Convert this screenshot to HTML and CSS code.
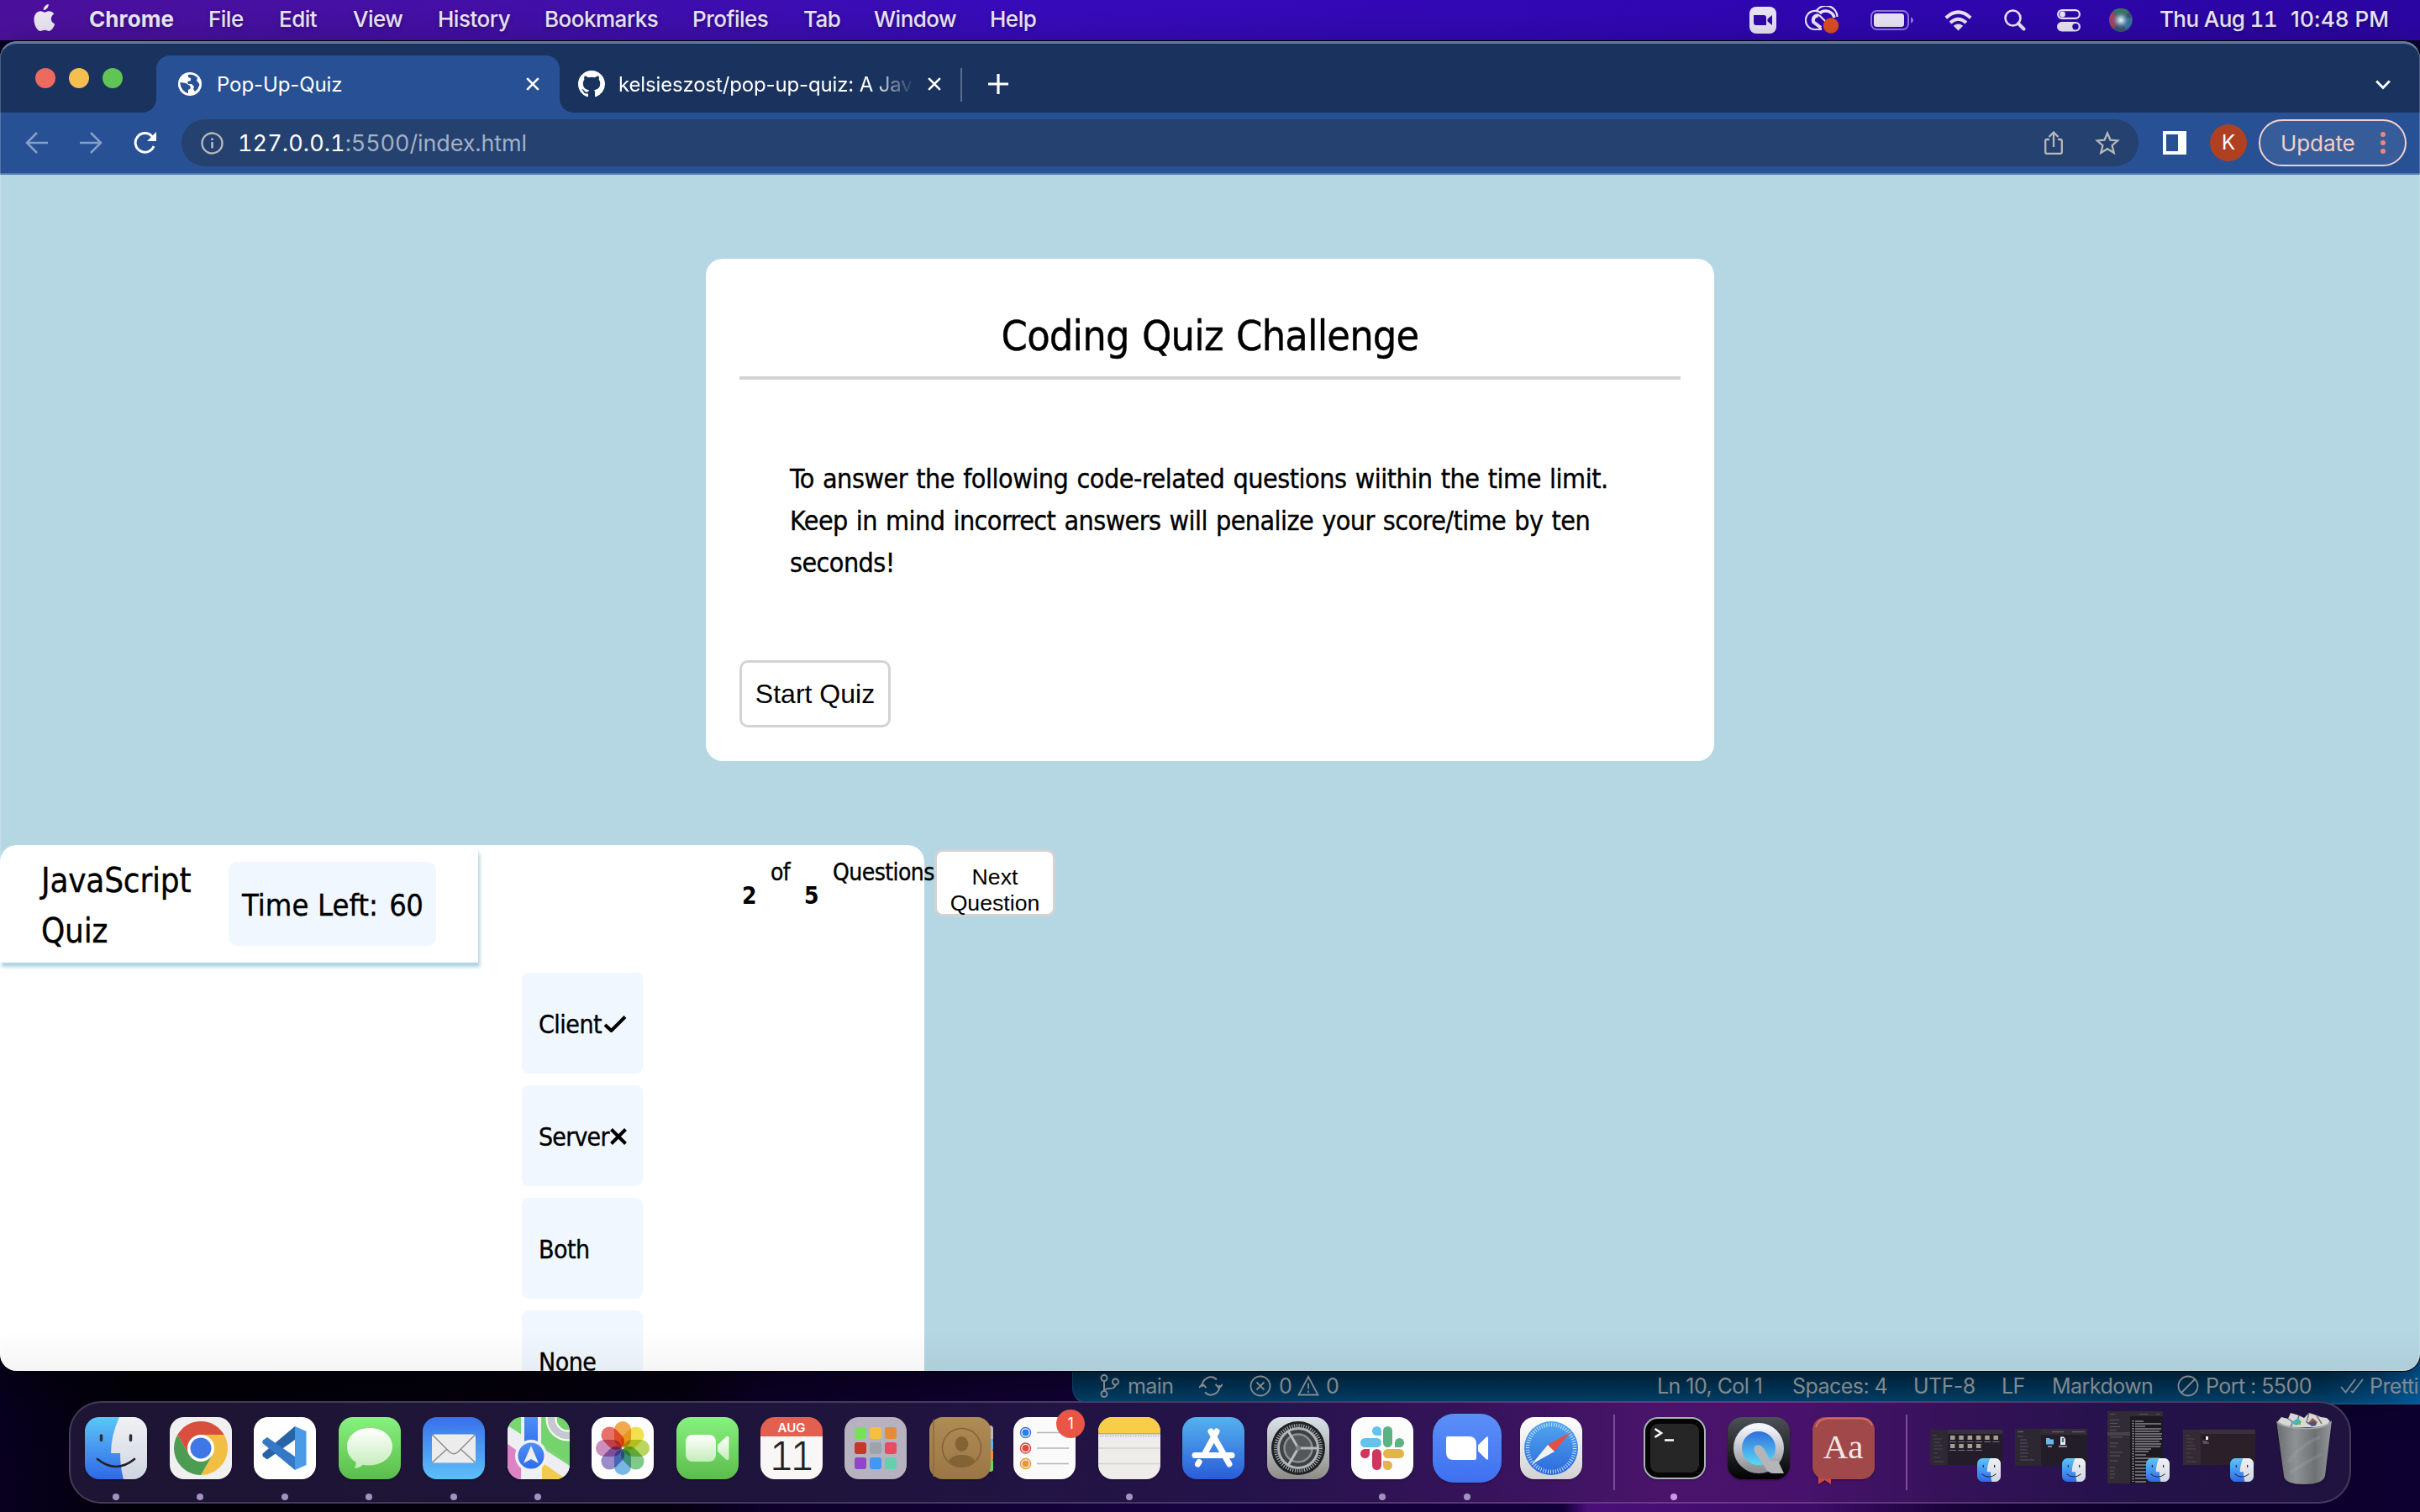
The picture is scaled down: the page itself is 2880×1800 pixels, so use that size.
FILE: index.html
```html
<!DOCTYPE html>
<html lang="en">
<head>
<meta charset="utf-8">
<title>Pop-Up-Quiz</title>
<link rel="stylesheet" href="styles.css">
</head>
<body>
<svg class="defs" width="0" height="0" aria-hidden="true">
  <defs>
    <linearGradient id="blueFace" x2="0" y2="1"><stop offset="0" stop-color="#5cc6f8"/><stop offset="1" stop-color="#3068e8"/></linearGradient>
    <linearGradient id="whiteFace" x2="0" y2="1"><stop offset="0" stop-color="#f1f1f3"/><stop offset="1" stop-color="#cfd6e2"/></linearGradient>
    <linearGradient id="silver" x2="0" y2="1"><stop offset="0" stop-color="#fff"/><stop offset="1" stop-color="#d2d2d2"/></linearGradient>
    <linearGradient id="bubble" x2="0" y2="1"><stop offset="0" stop-color="#fff"/><stop offset="1" stop-color="#c4ecb9"/></linearGradient>
    <linearGradient id="mapBlue" x2="0" y2="1"><stop offset="0" stop-color="#4f8ff5"/><stop offset="1" stop-color="#2c6bee"/></linearGradient>
    <linearGradient id="bin" x2="1" y2="0"><stop offset="0" stop-color="#6b6f71"/><stop offset=".35" stop-color="#8e9294"/><stop offset=".7" stop-color="#6d7173"/><stop offset="1" stop-color="#94989a"/></linearGradient>
    <linearGradient id="qRing" x2="0" y2="1"><stop offset="0" stop-color="#f4f6ff"/><stop offset="1" stop-color="#8f9296"/></linearGradient>
    <linearGradient id="qBlue" x2="0" y2="1"><stop offset="0" stop-color="#2d62d6"/><stop offset="1" stop-color="#5fe6fb"/></linearGradient>
    <linearGradient id="compass" x2="0" y2="1"><stop offset="0" stop-color="#50a8ee"/><stop offset="1" stop-color="#2d68dd"/></linearGradient>
    <linearGradient id="gearBg" x2="0" y2="1"><stop offset="0" stop-color="#d9e3ea"/><stop offset="1" stop-color="#8e8c88"/></linearGradient>
    <linearGradient id="bookBg" x2="0" y2="1"><stop offset="0" stop-color="#ae8c55"/><stop offset="1" stop-color="#9b7645"/></linearGradient>
    <radialGradient id="siri"><stop offset="0" stop-color="#fff"/><stop offset=".4" stop-color="#9cc6dd" stop-opacity=".8"/><stop offset="1" stop-color="#3b5c84" stop-opacity="0"/></radialGradient>
    <clipPath id="tile"><rect width="74" height="74" rx="17"/></clipPath>
    <symbol id="finder" viewBox="0 0 74 74">
      <g clip-path="url(#tile)">
        <rect width="74" height="74" fill="url(#blueFace)"/>
        <path d="M41 0Q31 22 31 43H42Q42 60 46 74H74V0Z" fill="url(#whiteFace)"/>
        <path d="M19.500 22V27.500M54.500 22V27.500" stroke="#2b2f38" stroke-width="3.500" stroke-linecap="round"/>
        <path d="M15 50Q37 68 59 50" fill="none" stroke="#202226" stroke-width="2.600" stroke-linecap="round"/>
      </g>
    </symbol>
  </defs>
</svg>

<div class="desktop">
  <header class="menubar">
    <nav class="menus">
      <svg width="26" height="33" viewBox="0 0 26 33" fill="#eee8f6"><path d="M17.800 0C18 3.500 15 7 11.800 7 11.500 3.800 14.500.5 17.800 0ZM18 8.200C20.500 8.200 23 9.400 24.400 11.600 19.200 14.800 20 21.500 25.300 23.700 23.800 28 21 32 18.200 32 16.200 32 15.600 30.800 13.200 30.800 10.800 30.800 10 32 8.200 32 4.500 32 .5 25 .5 18.400.5 11.800 4.500 8.300 8.200 8.300 10.500 8.300 12 9.700 13.400 9.700 14.600 9.700 16 8.200 18 8.200Z"/></svg>
      <b>Chrome</b><span>File</span><span>Edit</span><span>View</span><span>History</span><span>Bookmarks</span><span>Profiles</span><span>Tab</span><span>Window</span><span>Help</span>
    </nav>
    <div class="tray">
      <svg width="32" height="32" viewBox="0 0 32 32"><rect width="32" height="32" rx="8" fill="#eae5f6"/><path d="M5 10H17Q20 10 20 13V22H8Q5 22 5 19ZM21.500 14.500 27 10V22L21.500 17.500Z" fill="#3007ae"/></svg>
      <svg width="42" height="34" viewBox="0 0 42 34" fill="none" stroke="#eae5f6" stroke-width="2.200"><path d="M20 28H12A11 11 0 1 1 20 9.500"/><path d="M14 5.500A13.500 13.500 0 0 1 38.500 13M20 28 11 20A5 5 0 0 1 18 12L25 19"/><path d="M18 8C25 3.500 33 7 35 14" stroke-width="3.600"/><path d="M19 26 10 19A6 6 0 0 1 16 11.500" stroke-width="4"/><circle cx="31" cy="23.500" r="9.200" fill="#dc4e26" stroke="none"/></svg>
      <svg width="52" height="24" viewBox="0 0 52 24"><rect x="1" y="1" width="44" height="22" rx="6.500" fill="none" stroke="#8f78d6" stroke-width="2"/><rect x="4" y="4" width="36" height="16" rx="3.500" fill="#eae5f6"/><path d="M48 8.500Q51 9.500 51 12T48 15.500Z" fill="#8f78d6"/></svg>
      <svg width="33" height="25" viewBox="0 0 33 25" fill="none" stroke="#eae5f6" stroke-width="4"><path d="M1.800 9.200Q16.500-4.500 31.200 9.200M7 15Q16.500 6.500 26 15"/><path d="M16.500 24.500 10.800 18.800Q16.500 14 22.200 18.800Z" fill="#eae5f6" stroke="none"/></svg>
      <svg width="26" height="26" viewBox="0 0 26 26" fill="none" stroke="#eae5f6" stroke-linecap="round"><circle cx="10.500" cy="10.500" r="9" stroke-width="2.600"/><path d="M17 17 23.500 23.500" stroke-width="4"/></svg>
      <svg width="28" height="27" viewBox="0 0 28 27"><rect x="1.100" y="1.100" width="25.800" height="9.800" rx="4.900" fill="none" stroke="#eae5f6" stroke-width="2.200"/><circle cx="6.500" cy="6" r="3.400" fill="#eae5f6"/><rect y="15" width="28" height="11.500" rx="5.700" fill="#eae5f6"/><circle cx="22" cy="20.700" r="3.700" fill="#2d06a8"/></svg>
      <svg width="28" height="28" viewBox="0 0 28 28"><circle cx="14" cy="14" r="14" fill="#37566f"/><path d="M14 14 4 4A14 14 0 0 0 5 24Z" fill="#a8425f"/><path d="M14 14 4 4A14 14 0 0 1 24 4Z" fill="#3b7561"/><path d="M14 14 27 11A13 13 0 0 1 20 25Z" fill="#3a74a8"/><circle cx="14" cy="14" r="11" fill="url(#siri)"/></svg>
      <span class="date">Thu Aug 11</span><span class="time">10:48 PM</span>
    </div>
  </header>

  <section class="editor">
    <footer class="statusbar">
      <svg width="24" height="28" viewBox="0 0 24 28" fill="none" stroke="#83898c" stroke-width="2"><circle cx="5" cy="4.500" r="3.500"/><circle cx="5" cy="23.500" r="3.500"/><circle cx="18.500" cy="9" r="3.500"/><path d="M5 8V20M18.500 12.500Q18 17 12 17 6 17 5 20"/></svg>
      <span>main</span>
      <svg width="28" height="24" viewBox="0 0 28 24" fill="none" stroke="#83898c" stroke-width="2"><path d="M4 13A10 10 0 0 1 21 4.500M24 11A10 10 0 0 1 7 19.500M0 14 4 9.500 8.500 14M19.500 10 24 14.500 28 10"/></svg>
      <svg width="26" height="26" viewBox="0 0 26 26" fill="none" stroke="#83898c" stroke-width="1.800"><circle cx="13" cy="13" r="11.500"/><path d="M8.500 8.500 17.500 17.500M17.500 8.500 8.500 17.500"/></svg>
      <span>0</span>
      <svg width="26" height="26" viewBox="0 0 26 26" fill="none" stroke="#83898c" stroke-width="1.800"><path d="M13 2 24.500 23.500H1.500ZM13 9.500V16.500M13 18.500V21"/></svg>
      <span>0</span>
      <span>Ln 10, Col 1</span><span>Spaces: 4</span><span>UTF-8</span><span>LF</span><span>Markdown</span>
      <svg width="26" height="26" viewBox="0 0 26 26" fill="none" stroke="#83898c" stroke-width="1.800"><circle cx="13" cy="13" r="11.500"/><path d="M5 21 21 5"/></svg>
      <span>Port : 5500</span>
      <svg width="28" height="20" viewBox="0 0 28 20" fill="none" stroke="#83898c" stroke-width="1.800"><path d="M1 11 6.500 17.500 18 2M13 16 15 17.500 27 2"/></svg>
      <span>Pretti</span>
    </footer>
  </section>

  <main class="browser">
    <div class="tabstrip">
      <div class="lights"><i class="close"></i><i class="min"></i><i class="max"></i></div>
      <div class="tab active">
        <svg width="28" height="28" viewBox="0 0 28 28"><circle cx="14" cy="14" r="14" fill="#fff"/><path d="M2.500 12 9 13 14 16 15 19 12 21V25Q4 23 2.500 14ZM12 3Q19 2 23 7L22 10 24 12 25.500 15Q24 20 20 23L18 20 19 17 16 14H12L11 11 15 10V7L12 6Z" fill="#275194"/></svg>
        <span class="tabtitle">Pop-Up-Quiz</span>
        <svg class="x" width="16" height="16" viewBox="0 0 16 16"><path d="M1.200 1.200 14.800 14.800M14.800 1.200 1.200 14.800" stroke="#fff" stroke-width="2.600"/></svg>
      </div>
      <div class="tab">
        <svg width="32" height="32" viewBox="0 0 16 16"><path fill="#fff" d="M8 0C3.580 0 0 3.580 0 8c0 3.540 2.290 6.530 5.470 7.590.4.070.55-.17.55-.38 0-.19-.01-.82-.01-1.490-2.010.37-2.530-.49-2.690-.94-.09-.23-.48-.94-.82-1.130-.28-.15-.68-.52-.01-.53.63-.01 1.080.58 1.230.82.72 1.210 1.870.87 2.330.66.07-.52.28-.87.51-1.070-1.780-.2-3.640-.89-3.640-3.950 0-.87.31-1.590.82-2.150-.08-.2-.36-1.020.08-2.120 0 0 .67-.21 2.200.82.64-.18 1.320-.27 2-.27s1.360.09 2 .27c1.530-1.040 2.200-.82 2.200-.82.44 1.100.16 1.920.08 2.120.51.56.82 1.270.82 2.150 0 3.070-1.870 3.750-3.650 3.950.29.25.54.73.54 1.480 0 1.070-.01 1.930-.01 2.200 0 .21.15.46.55.38A8.010 8.010 0 0 0 16 8c0-4.420-3.580-8-8-8Z"/></svg>
        <span class="tabtitle fade">kelsieszost/pop-up-quiz: A Jav</span>
        <svg class="x" width="16" height="16" viewBox="0 0 16 16"><path d="M1.200 1.200 14.800 14.800M14.800 1.200 1.200 14.800" stroke="#fff" stroke-width="2.600"/></svg>
      </div>
      <i class="sep"></i>
      <svg class="plus" width="24" height="24" viewBox="0 0 24 24"><path d="M12 0V24M0 12H24" stroke="#fff" stroke-width="3.200"/></svg>
      <svg class="chev" width="18" height="12" viewBox="0 0 18 12"><path d="M1.200 1.500 9 9.500 16.800 1.500" fill="none" stroke="#fff" stroke-width="2.800"/></svg>
    </div>

    <div class="toolbar">
      <svg width="28" height="26" viewBox="0 0 28 26" fill="none" stroke="#869fca" stroke-width="2.500"><path d="M27 13H2M14 1 2 13 14 25"/></svg>
      <svg width="28" height="26" viewBox="0 0 28 26" fill="none" stroke="#869fca" stroke-width="2.500"><path d="M1 13H26M14 1 26 13 14 25"/></svg>
      <svg width="28" height="28" viewBox="0 0 28 28"><path d="M24 18A11.300 11.300 0 1 1 22 6.500" fill="none" stroke="#fff" stroke-width="3"/><path d="M27 1V12H16Z" fill="#fff"/></svg>
      <div class="omnibox">
        <svg width="27" height="27" viewBox="0 0 27 27" fill="none" stroke="#b6b8bb" stroke-width="2.400"><circle cx="13.500" cy="13.500" r="12"/><path d="M13.500 12V19.500M13.500 7.500V10" stroke-width="2.600"/></svg>
        <span class="url"><em>127.0.0.1</em>:5500/index.html</span>
        <svg class="share" width="22" height="28" viewBox="0 0 22 28" fill="none" stroke="#b6b8bb" stroke-width="2.300"><path d="M6 10H3Q1.200 10 1.200 12V25Q1.200 26.800 3 26.800H19Q20.800 26.800 20.800 25V12Q20.800 10 19 10H16M11 19V2M5.500 7 11 1.500 16.500 7"/></svg>
        <svg width="30" height="28" viewBox="0 0 30 28" fill="none" stroke="#b6b8bb" stroke-width="2.300"><path d="M15 2.500 18.500 10.700 27.300 11.400 20.600 17.200 22.700 25.900 15 21.200 7.300 25.900 9.400 17.200 2.700 11.400 11.500 10.700Z"/></svg>
      </div>
      <svg class="panelicon" width="28" height="28" viewBox="0 0 28 28"><path fill-rule="evenodd" d="M0 0H28V28H0ZM4 4V24H18V4Z" fill="#fff"/></svg>
      <span class="avatar">K</span>
      <div class="update"><span>Update</span><svg width="6" height="26" viewBox="0 0 6 26" fill="#ea8878"><circle cx="3" cy="3" r="3"/><circle cx="3" cy="13" r="3"/><circle cx="3" cy="23" r="3"/></svg></div>
    </div>

    <div class="page">
      <section class="intro">
        <h1>Coding Quiz Challenge</h1>
        <p><span class="l1">To answer the following code-related questions wiithin the time limit.</span><br><span class="l2">Keep in mind incorrect answers will penalize your score/time by ten</span><br>seconds!</p>
        <button class="start">Start Quiz</button>
      </section>
      <section class="quiz">
        <header class="quizhead">
          <h2>JavaScript<br>Quiz</h2>
          <div class="timer">Time Left:<span>60</span></div>
        </header>
        <ul class="options">
          <li>Client<svg width="28" height="20" viewBox="0 0 28 20"><path d="M2 11 9.500 18 26 1.500" fill="none" stroke="#000" stroke-width="4"/></svg></li>
          <li class="wrong">Server<svg width="20" height="20" viewBox="0 0 20 20"><path d="M1.500 1.500 18.500 18.500M18.500 1.500 1.500 18.500" stroke="#000" stroke-width="4"/></svg></li>
          <li>Both</li>
          <li>None</li>
        </ul>
        <footer class="count">
          <b>2</b><span>of</span><b>5</b><span>Questions</span><button class="next">Next Question</button>
        </footer>
      </section>
    </div>
  </main>

  <nav class="dock">
    <div class="app on"><svg><use href="#finder"/></svg></div>
    <div class="app on"><svg viewBox="0 0 74 74"><rect width="74" height="74" rx="17" fill="#f0f0f0"/><path d="M64.700 21A32 32 0 0 1 37 69L50.900 45 37 21Z" fill="#f2bf42"/><path d="M9.300 21A32 32 0 0 0 37 69L50.900 45H23.100Z" fill="#4c9d51"/><path d="M9.300 21A32 32 0 0 1 64.700 21H37L23.100 45Z" fill="#d84f3e"/><circle cx="37" cy="37" r="16" fill="#fff"/><circle cx="37" cy="37" r="12.500" fill="#3f78e6"/></svg></div>
    <div class="app on"><svg viewBox="0 0 74 74"><rect width="74" height="74" rx="17" fill="#fff"/><path d="M49 11V27L16 50.500 11 47Q9.500 45 11 43Z" fill="#2763a5"/><path d="M49 63V47L16 24 11 27.500Q9.500 29.500 11 31.500Z" fill="#3478c6"/><path d="M49 11 62.500 17V57L49 63Z" fill="#4a9ae8"/></svg></div>
    <div class="app on"><svg viewBox="0 0 74 74"><rect width="74" height="74" rx="17" fill="url(#msg)"/><defs><linearGradient id="msg" x2="0" y2="1"><stop stop-color="#88f17f"/><stop offset="1" stop-color="#5bbd4b"/></linearGradient></defs><path d="M37 13C22 13 10 22 10 35 10 43 14 50 20.500 53.500 21 57 20 59 18.500 61 23 61 27 59 29 56.800 48 60 64 50 64 35 64 22 52 13 37 13Z" fill="url(#bubble)"/></svg></div>
    <div class="app on"><svg viewBox="0 0 74 74"><defs><linearGradient id="ml" x2="0" y2="1"><stop stop-color="#3a70ea"/><stop offset="1" stop-color="#5dc0f9"/></linearGradient></defs><rect width="74" height="74" rx="17" fill="url(#ml)"/><rect x="11" y="20.500" width="52" height="34" rx="3.500" fill="#ececec"/><path d="M12 53.500 29 38M62 53.500 45 38M12 21.500 32 41.500Q37 46 42 41.500L62 21.500" fill="none" stroke="#8d8d8d" stroke-width="1.500"/></svg></div>
    <div class="app on"><svg viewBox="0 0 74 74"><g clip-path="url(#tile)"><rect width="74" height="74" fill="#7ad673"/><path d="M0 10 74 58V74H0Z" fill="#eeeef2"/><path d="M0 32 17 44V74H0Z" fill="#dc82c5"/><path d="M41 54 70 74H41Z" fill="#f3cb4c"/><path d="M41 0V30L74 55V0Z" fill="#74d36d"/><circle cx="72" cy="2" r="20" fill="none" stroke="#fff" stroke-width="13"/><circle cx="72" cy="2" r="20" fill="none" stroke="#c5c8ce" stroke-width="9"/><path d="M16 0H40V74H16Z" fill="#eef0f4"/><path d="M20 0H36V40H20Z" fill="url(#mapBlue)"/><circle cx="28" cy="46" r="19" fill="#f1f1f4"/><circle cx="28" cy="46" r="15.500" fill="url(#mapBlue)"/><path d="M28 34 37 55 28 50 19 55Z" fill="#eee"/></g></svg></div>
    <div class="app photos"><svg viewBox="0 0 74 74"><rect width="74" height="74" rx="17" fill="#fdfdfd"/><g transform="translate(37 37)"><rect class="petal" x="-10" y="-32" width="20" height="31" rx="10" fill="#f2a23d"/><rect class="petal" x="-10" y="-32" width="20" height="31" rx="10" fill="#f3df3d" transform="rotate(45)"/><rect class="petal" x="-10" y="-32" width="20" height="31" rx="10" fill="#b5d451" transform="rotate(90)"/><rect class="petal" x="-10" y="-32" width="20" height="31" rx="10" fill="#76c57f" transform="rotate(135)"/><rect class="petal" x="-10" y="-32" width="20" height="31" rx="10" fill="#6ab0e2" transform="rotate(180)"/><rect class="petal" x="-10" y="-32" width="20" height="31" rx="10" fill="#9081c8" transform="rotate(225)"/><rect class="petal" x="-10" y="-32" width="20" height="31" rx="10" fill="#c983b8" transform="rotate(270)"/><rect class="petal" x="-10" y="-32" width="20" height="31" rx="10" fill="#e9605a" transform="rotate(315)"/></g></svg></div>
    <div class="app"><svg viewBox="0 0 74 74"><rect width="74" height="74" rx="17" fill="url(#msg)"/><rect x="11" y="21" width="36" height="32" rx="8" fill="url(#bubble)"/><path d="M49 33 59 23.500Q62.500 21.500 62.500 25V49Q62.500 52.500 59 50.500L49 41Z" fill="url(#bubble)"/></svg></div>
    <div class="app cal"><span class="month">AUG</span><span class="day">11</span></div>
    <div class="app"><svg viewBox="0 0 74 74"><rect width="74" height="74" rx="17" fill="#b6b2c0"/><g><rect x="12" y="12" width="14" height="14" rx="3" fill="#76e356"/><rect x="30" y="12" width="14" height="14" rx="3" fill="#f5bf42"/><rect x="48" y="12" width="14" height="14" rx="3" fill="#e88b36"/><rect x="12" y="30" width="14" height="14" rx="3" fill="#c8352a"/><rect x="30" y="30" width="14" height="14" rx="3" fill="#9da3a8"/><rect x="48" y="30" width="14" height="14" rx="3" fill="#ea4b60"/><rect x="12" y="48" width="14" height="14" rx="3" fill="#9146c8"/><rect x="30" y="48" width="14" height="14" rx="3" fill="#4297f3"/><rect x="48" y="48" width="14" height="14" rx="3" fill="#66cfae"/></g></svg></div>
    <div class="app"><svg viewBox="0 0 74 74"><rect x="60" y="10" width="16" height="19" rx="4" fill="#b8b8b8"/><rect x="60" y="26" width="16" height="14" rx="3" fill="#5cb4ee"/><rect x="60" y="38" width="16" height="14" rx="3" fill="#ee9138"/><rect x="60" y="50" width="16" height="15" rx="3" fill="#67d561"/><rect width="73" height="74" rx="16" fill="url(#bookBg)"/><path d="M5 3V71" stroke="#8a6a3c" stroke-width="1.500"/><g fill="none" stroke="#836334" stroke-width="1.500"><circle cx="38.500" cy="36.500" r="23" /></g><ellipse cx="38.500" cy="32" rx="7.800" ry="9" fill="#836334"/><path d="M22.500 53Q26 45 38.500 45T54.500 53Q48 60 38.500 60T22.500 53Z" fill="#836334"/></svg></div>
    <div class="app"><svg viewBox="0 0 74 74"><rect width="74" height="74" rx="17" fill="#fafafa"/><path d="M28 18.500H66M28 37H66M28 55.500H66" stroke="#b5b5b5" stroke-width="1.600"/><g fill="none" stroke-width="1.500"><circle cx="14.500" cy="18.500" r="6" stroke="#3478f0"/><circle cx="14.500" cy="37" r="6" stroke="#dd4a3d"/><circle cx="14.500" cy="55.500" r="6" stroke="#e6953a"/></g><circle cx="14.500" cy="18.500" r="4" fill="#3478f0"/><circle cx="14.500" cy="37" r="4" fill="#dd4a3d"/><circle cx="14.500" cy="55.500" r="4" fill="#e6953a"/></svg><span class="badge">1</span></div>
    <div class="app on"><svg viewBox="0 0 74 74"><g clip-path="url(#tile)"><rect width="74" height="74" fill="#eeedea"/><rect width="74" height="19" fill="#f8cd48"/><path d="M0 19.700H74" stroke="#b0a99c" stroke-width="1.500"/><path d="M2 22.500H74" stroke="#b5b2ae" stroke-width="1.500" stroke-dasharray="1.500 1.500"/><path d="M0 37H74M0 55.500H74" stroke="#d2d1cf" stroke-width="1.500"/></g></svg></div>
    <div class="app"><svg viewBox="0 0 74 74"><defs><linearGradient id="as" x2="0" y2="1"><stop stop-color="#54b2ee"/><stop offset="1" stop-color="#2a5cd9"/></linearGradient></defs><rect width="74" height="74" rx="17" fill="url(#as)"/><g stroke="#fff" stroke-width="7" stroke-linecap="round"><path d="M41 17 26 45M34 17 56 56M15 45.500H59M20 53.500 18.500 56"/></g></svg></div>
    <div class="app"><svg viewBox="0 0 74 74"><rect width="74" height="74" rx="17" fill="url(#gearBg)"/><circle cx="37" cy="37" r="32" fill="#1f2122"/><circle cx="37" cy="37" r="27" fill="none" stroke="#a9aeb0" stroke-width="4" stroke-dasharray="1.200 1.630"/><circle cx="37" cy="37" r="23.500" fill="#3d4041" stroke="#aeb3b5" stroke-width="3"/><circle cx="37" cy="37" r="16.500" fill="#55585a" stroke="#8b8f90" stroke-width="2.500"/><path d="M37 37H61M37 37 25 16.500M37 37 25 57.500" stroke="#b7bcbe" stroke-width="3"/><circle cx="37" cy="37" r="3" fill="#7b7f80"/></svg></div>
    <div class="app on"><svg viewBox="0 0 74 74"><rect width="74" height="74" rx="17" fill="#fdfdfd"/><rect x="38" y="11" width="11" height="25" rx="5.500" fill="#5bb381"/><path d="M52 36V30.500A5.500 5.500 0 1 1 57.500 36Z" fill="#5bb381"/><rect x="11" y="25" width="25" height="11" rx="5.500" fill="#64c3ea"/><path d="M36 22H30.500A5.500 5.500 0 1 1 36 16.500Z" fill="#64c3ea"/><rect x="25" y="38" width="11" height="25" rx="5.500" fill="#d0355b"/><path d="M22 38V43.500A5.500 5.500 0 1 1 16.500 38Z" fill="#d0355b"/><rect x="38" y="38" width="25" height="11" rx="5.500" fill="#e2b44b"/><path d="M38 52H43.500A5.500 5.500 0 1 1 38 57.500Z" fill="#e2b44b"/></svg></div>
    <div class="app on zoomapp"><svg viewBox="0 0 82 82"><defs><linearGradient id="zm" x2="0" y2="1"><stop stop-color="#5b90f7"/><stop offset="1" stop-color="#3f70f2"/></linearGradient></defs><rect width="82" height="82" rx="25" fill="url(#zm)"/><path d="M16 29Q16 27 18 27H43Q52 27 52 36V53Q52 55 50 55H25Q16 55 16 46ZM54 37.500 63.500 28Q66 26 66 29V53Q66 56 63.500 54L54 44.500Z" fill="#fff"/></svg></div>
    <div class="app"><svg viewBox="0 0 74 74"><rect width="74" height="74" rx="17" fill="url(#silver)"/><circle cx="37" cy="37" r="32" fill="url(#compass)"/><circle cx="37" cy="37" r="28" fill="none" stroke="#c6e2fb" stroke-width="4.500" stroke-dasharray="1 1.930"/><path d="M60 18 41 41 33 33Z" fill="#e34f41"/><path d="M14 56 33 33 41 41Z" fill="#f2f2f2"/></svg></div>
    <i class="rule"></i>
    <div class="app on lit"><svg viewBox="0 0 74 74"><rect width="74" height="74" rx="17" fill="#a9b5b5"/><rect x="2" y="2" width="70" height="70" rx="15" fill="#050505"/><rect x="8" y="8" width="58" height="58" rx="9" fill="#262626"/><path d="M13.500 14 21 19 13.500 24M25 27.500H36" fill="none" stroke="#fff" stroke-width="2.600"/></svg></div>
    <div class="app"><svg viewBox="0 0 74 74"><defs><linearGradient id="qb" x2="0" y2="1"><stop stop-color="#4c5156"/><stop offset="1" stop-color="#020202"/></linearGradient></defs><rect width="74" height="74" rx="17" fill="url(#qb)"/><circle cx="37" cy="37" r="25" fill="url(#qBlue)" stroke="url(#qRing)" stroke-width="10"/><path d="M33 34Q40 32 44 39L51 52H60L67 67H54Q48 67 44 59L33 43Q30 37 33 34Z" fill="#b3b5b8"/></svg></div>
    <div class="app dict"><svg viewBox="0 0 74 80"><path d="M7 68V80L14.500 75 22 80V68Z" fill="#d2473a"/><rect width="74" height="74" rx="15" fill="#a1484a"/><path d="M4 12Q7 2 18 1.500H58Q68 2 71 10" fill="none" stroke="#d46d66" stroke-width="2"/></svg><span>Aa</span></div>
    <i class="rule"></i>
    <div class="app"><div class="thumb"><svg width="86" height="42" viewBox="0 0 86 42"><rect width="86" height="42" rx="2" fill="#221d29"/><path d="M0 0H21V42H0Z" fill="#2e2833"/><path d="M21 2.500H86" stroke="#37313d" stroke-width="5"/><path d="M3 7H8M4 11H14M4 15H12M4 19H14M4 23H15M4 28H9M4 33H12M4 38H16" stroke="#4f4957" stroke-width="1.200"/><path d="M24 9.500H83M24 19.500H63" stroke="#a89c8e" stroke-width="5" stroke-dasharray="5.500 4.800"/><path d="M23 14.500H83M23 24.500H63" stroke="#77737c" stroke-width="1.200" stroke-dasharray="8 2.300"/></svg><svg class="mini"><use href="#finder"/></svg></div></div>
    <div class="app"><div class="thumb t2"><svg width="86" height="44" viewBox="0 0 86 44"><rect width="86" height="44" rx="2" fill="#221d29"/><path d="M0 0H31V44H0Z" fill="#2c2731"/><path d="M31 3.500H86" stroke="#312c36" stroke-width="7"/><path d="M3 3.500H10M44 3.500H58M68 3.500H83" stroke="#625c68" stroke-width="1.500"/><path d="M3 9H10M6 13H14M6 17H15M6 21H16M6 25H14M6 29H16M6 33H15M6 37H23" stroke="#565568" stroke-width="1.200"/><path d="M37 11H41L42 12.500H46V18.500H37Z" fill="#67b9ed"/><path d="M54 9.500H58L60 12V19H54Z" fill="#eee"/><path d="M57 11V16" stroke="#3d7dad" stroke-width="2.500"/><path d="M39 21H44M52 21H62" stroke="#aaa" stroke-width="1.300"/></svg><svg class="mini"><use href="#finder"/></svg></div></div>
    <div class="app"><div class="thumb t3"><svg width="66" height="86" viewBox="0 0 66 86"><rect width="66" height="86" rx="2" fill="#1c1921"/><path d="M0 0H27V86H0Z" fill="#302b35"/><path d="M27 3H66" stroke="#312c36" stroke-width="6"/><path d="M0 27H27" stroke="#47424d" stroke-width="4"/><path d="M3 3.500H9M38 3.500H48M58 3.500H63M3 10.500H14M3 14.500H12M3 18.500H15M3 22.500H11M3 31H18M3 38H13M3 42H11M3 49H18M3 53H15M3 59H12M3 67H9M3 71H8M3 75H9M3 79H8" stroke="#5b5661" stroke-width="1.200"/><path d="M30.500 11V84" stroke="#b4b3b8" stroke-width="1.600" stroke-dasharray="1.600 1.400"/><path d="M33 12H43M33 15H64M33 18H45M33 21H64M33 24H62M33 27H65M33 30H64M33 33H65M33 36H62M33 39H64M33 42H63M33 45H52M33 48H49M33 52H46M33 56H62M33 60H48M33 64H48M33 68H46M33 72H47M33 76H47M33 80H47M33 84H46" stroke="#85828b" stroke-width="1.500"/></svg><svg class="mini"><use href="#finder"/></svg></div></div>
    <div class="app"><div class="thumb"><svg width="86" height="42" viewBox="0 0 86 42"><rect width="86" height="42" rx="2" fill="#2b2029"/><path d="M0 0H21V42H0Z" fill="#332a35"/><path d="M21 2.500H86" stroke="#3b303a" stroke-width="5"/><path d="M3 7H8M4 11H14M4 15H12M4 19H14M4 23H15M4 28H9M4 33H12M4 38H16" stroke="#504652" stroke-width="1.200"/><path d="M24 8H27V11H24Z" fill="#111"/><path d="M27 8H30V12H27Z" fill="#eee"/><path d="M23 14H29M24 16H31" stroke="#8a8088" stroke-width="1.200"/></svg><svg class="mini"><use href="#finder"/></svg></div></div>
    <div class="app"><svg class="trash" viewBox="0 0 66 86"><path d="M1 12 6 6 14 8 17 1 27 4 33 7 39 1 48 4 53 6 60 7 64 11 58 18H8Z" fill="#d8d8d8"/><path d="M14 8 20 12 17 17M27 4 24 13M39 1 36 12 44 16M48 4 54 14" fill="none" stroke="#777" stroke-width="1.500"/><path d="M17 13 26 7 30 12 24 16Z" fill="#46b3d2"/><path d="M24 12H29V15H22Z" fill="#68b94a"/><path d="M37 14 43 7 49 12 46 17Z" fill="#a65a38"/><path d="M38 13 42 17 48 15 46 11Z" fill="#3d5690"/><path d="M0 10Q8 18 33 18.500T66 10L58 76Q56 86 33 86T9 76Z" fill="url(#bin)"/><path d="M1 12Q8 19 33 19.500T65 12" fill="none" stroke="#a8abad" stroke-width="1.300"/><path d="M14 60Q30 38 52 30M16 72Q34 60 54 50" fill="none" stroke="#a3a6a8" stroke-width="4" opacity=".25"/></svg></div>
  </nav>
</div>
</body>
</html>
```
FILE: styles.css
```css
* { box-sizing: border-box; }
html, body { margin: 0; }
body { width: 2880px; height: 1800px; overflow: hidden; background: #07001a; }
svg { display: block; flex: none; }
button { margin: 0; font-family: "Liberation Sans", Arial, sans-serif; color: #000; }
.defs { position: absolute; }

.desktop {
  position: relative; width: 2880px; height: 1800px; overflow: hidden;
  font-family: Inter, "Liberation Sans", sans-serif;
  background:
    linear-gradient(90deg, #080020 0, #020008 160px, #05000f 800px, #0d0029 900px, #16033f 1400px, #12003a 1860px, #4a0f78 1890px, #3d0c66 2160px, #190338 2330px, #0d002b 2550px, #0d0030 100%);
}

/* Menu bar */
.menubar {
  height: 48px; display: flex; justify-content: space-between;
  background: linear-gradient(90deg, #4c119c 0, #4310a8 600px, #380cbb 1180px, #3007b3 2000px, #2c06a3 100%);
  color: #eee8f6; font-size: 26px; line-height: 45px; font-weight: 500; letter-spacing: -.5px;
  white-space: nowrap; text-shadow: 0 2px 5px rgba(0,0,0,.3);
}
.menus {
  display: grid; align-items: start; padding-left: 40px;
  grid-template-columns: 66px 142px 84px 88px 101px 127px 176px 132px 84px 138px 80px;
}
.menus b { font-weight: 700; letter-spacing: .1px; }
.menus svg { margin-top: 5px; }
.tray {
  display: grid; width: 798px; align-items: center;
  grid-template-columns: 66px 78px 88px 71px 63px 62px 60px 156px 120px;
}
.tray .date { margin-top: -3px; letter-spacing: -.6px; font-variant-numeric: tabular-nums; }
.tray .time { margin-top: -3px; letter-spacing: .1px; }

/* Editor window peeking out behind the browser */
.editor {
  position: absolute; left: 1276px; top: 1560px; width: 1640px; height: 112px;
  border-radius: 0 0 0 20px; overflow: hidden; display: flex; align-items: flex-end;
  background: linear-gradient(180deg, #002f50 60%, #004a7a 100%);
  border-bottom: 2px solid #1c5f8c; border-left: 1px solid #17547d;
}
.editor::after { content: ""; position: absolute; right: 36px; bottom: 0; width: 120px; height: 60px; background: linear-gradient(90deg, transparent, rgba(0,105,185,.7)); }
.statusbar {
  position: relative; z-index: 1;
  display: grid; align-items: center; height: 40px; padding-left: 32px;
  grid-template-columns: 33px 85px 60px 35px 22px 34px 394px 161px 144px 105px 60px 149px 34px 160px 35px 120px;
  color: #83898c; font-size: 25px; letter-spacing: -.55px; white-space: nowrap;
}

/* Browser window */
.browser {
  position: absolute; left: 0; top: 49px; width: 2880px; height: 1583px;
  border-radius: 20px; overflow: hidden; background: #b5d7e3;
  display: flex; flex-direction: column;
  box-shadow: 0 0 0 1px #000, 0 20px 60px rgba(0,0,0,.5);
}
.browser::after { content: ""; position: absolute; inset: 0; border-radius: 20px; border: 1px solid rgba(255,255,255,.22); border-top: 3px solid rgba(150,170,200,.6); background: linear-gradient(0deg, rgba(0,0,0,.04), transparent 45px); }

.tabstrip { height: 85px; background: #1a335e; display: flex; align-items: flex-start; color: #fff; flex: none; }
.lights { display: flex; gap: 16px; width: 186px; padding: 32px 0 0 42px; }
.lights i { width: 24px; height: 24px; border-radius: 50%; }
.lights .close { background: #ec6a5e; }
.lights .min { background: #f4bf4f; }
.lights .max { background: #61c554; }
.tab { display: flex; align-items: center; height: 68px; margin-top: 17px; width: 477px; padding: 0 23px 0 22px; }
.tab.active { position: relative; width: 480px; padding: 0 24px 0 26px; background: #275194; border-radius: 16px 16px 0 0; }
.tab.active::before, .tab.active::after { content: ""; position: absolute; bottom: 0; width: 16px; height: 16px; }
.tab.active::before { left: -16px; background: radial-gradient(circle at 0 0, transparent 15.500px, #275194 16px); }
.tab.active::after { right: -16px; background: radial-gradient(circle at 100% 0, transparent 15.500px, #275194 16px); }
.tabtitle { margin-left: 18px; font-size: 24px; letter-spacing: -.1px; white-space: nowrap; }
.tabtitle.fade { margin-left: 16px; width: 354px; letter-spacing: -.15px; -webkit-mask: linear-gradient(90deg, #000 300px, transparent 352px); mask: linear-gradient(90deg, #000 300px, transparent 352px); }
.tab .x { margin-left: auto; }
.sep { width: 2px; height: 40px; margin-top: 32px; background: #5a6c8c; }
.plus { margin: 39px 0 0 31px; }
.chev { margin: 46px 35px 0 auto; }

.toolbar { height: 74px; flex: none; display: flex; align-items: center; background: #275194; border-bottom: 2px solid #5078af; padding: 0 16px 0 30px; }
.toolbar > svg:nth-child(2) { margin-left: 36px; }
.toolbar > svg:nth-child(3) { margin-left: 37px; }
.omnibox { display: flex; align-items: center; width: 2329px; height: 56px; margin-left: 29px; border-radius: 28px; background: #24416f; padding: 0 22px 0 23px; }
.url { margin-left: 17px; font-size: 27px; letter-spacing: -.12px; color: #a3b0c5; font-variant-numeric: tabular-nums; }
.url em { font-style: normal; color: #fff; letter-spacing: .1px; }
.share { margin-left: auto; margin-right: 38px; }
.toolbar .panelicon { margin-left: 29px; }
.avatar { width: 44px; height: 44px; margin-left: 28px; border-radius: 50%; background: #b04022; color: #fff; font-size: 24px; line-height: 44px; text-align: center; }
.update { display: flex; justify-content: space-between; align-items: center; margin-left: auto; width: 176px; height: 56px; border: 2px solid #f3d0ce; border-radius: 28px; background: #365d9a; color: #f5cfcb; font-size: 26px; padding: 0 23px 0 24px; letter-spacing: -.1px; }

/* Quiz page */
.page { flex: 1; padding-top: 100px; color: #000; font-family: "DejaVu Sans Condensed", Tahoma, sans-serif; -webkit-text-stroke: .35px #000; }
.page button { -webkit-text-stroke: 0; }
.page b { -webkit-text-stroke: 0; }
.intro { width: 1200px; height: 598px; margin: 0 auto; padding: 40px; border-radius: 20px; background: #fff; }
.intro h1 { margin: 0; height: 104px; padding-top: 6px; border-bottom: 4px solid #d3d3d3; text-align: center; font-weight: 400; font-size: 50px; line-height: 92px; letter-spacing: -.85px; word-spacing: 2px; }
.intro p { margin: 93px 0 0 60px; height: 241px; font-size: 32px; line-height: 50px; letter-spacing: -.56px; word-spacing: 1.500px; white-space: nowrap; }
.intro .l1 { letter-spacing: -.48px; }
.start { display: block; width: 180px; height: 80px; padding: 0; border: 3px solid #d3d3d3; border-radius: 10px; background: #fff; font-size: 32px; white-space: nowrap; }

.quiz { display: flex; align-items: flex-start; width: 1100px; height: 626px; margin-top: 100px; border-radius: 20px 20px 0 20px; background: #fff; }
.quizhead { flex: none; display: flex; justify-content: space-between; width: 569px; height: 140px; padding: 20px 50px 20px 49px; border-radius: 20px 10px 0 0; box-shadow: 2px 5px 4px #a9d3e0; }
.quizhead h2 { margin: -8px 0 0; font-weight: 400; font-size: 40px; line-height: 60px; letter-spacing: -.2px; }
.timer { width: 247px; height: 100px; border-radius: 10px; background: #f1f7fe; padding-left: 16px; font-size: 36px; line-height: 103px; white-space: nowrap; letter-spacing: .1px; }
.timer span { margin-left: 13px; letter-spacing: -.5px; }
.options { flex: none; list-style: none; margin: 152px 0 0 52px; padding: 0; display: flex; flex-direction: column; gap: 14px; height: 474px; }
.options li { flex: none; display: flex; align-items: center; width: 144px; height: 120px; padding: 3px 19px 0 20px; border-radius: 8px; background: #f1f7fe; font-size: 30px; letter-spacing: -.5px; }
.options svg { margin: 0 0 2px auto; }
.options .wrong { letter-spacing: -.8px; }
.count { flex: none; display: grid; margin-left: 118px; grid-template-columns: 34px 40px 34px 122px 144px; font-size: 28px; line-height: 34px; letter-spacing: -.55px; }
.count span { margin-top: 16px; }
.count b { margin-top: 44px; letter-spacing: 0; }
.next { height: 80px; margin: 5px 1px 0 -1px; border: 3px solid #d3d3d3; border-radius: 10px; background: #fff; padding: 15px 10px 0; font-size: 26.670px; line-height: 31px; }

/* Dock */
.dock {
  position: absolute; left: 82px; top: 1668px; width: 2716px; height: 122px;
  display: flex; padding: 17px 0 0 4px; border: 2px solid rgba(255,255,255,.17); border-radius: 38px;
  background: linear-gradient(90deg, #1d1533 0, #1f143c 900px, #24134a 1400px, #35135a 1660px, #4a146b 1900px, #48126c 2050px, #341258 2250px, #24124a 2450px, #20133f 100%);
}
.app { position: relative; flex: none; width: 100.470px; height: 101px; display: flex; flex-direction: column; align-items: center; }
.app > svg { width: 74px; height: 74px; overflow: visible; filter: drop-shadow(0 1px 1px rgba(0,0,0,.35)); }
.app.on::after { content: ""; position: absolute; left: 46px; top: 91px; width: 8px; height: 8px; border-radius: 50%; background: #a392bd; }
.app.lit::after { background: #c997ec; }
.petal { mix-blend-mode: multiply; opacity: .9; }
.zoomapp > svg { width: 82px; height: 82px; margin-top: -4px; }
.cal .month { width: 74px; height: 23px; border-radius: 17px 17px 0 0; background: #e2604f; color: #fff; font-size: 15px; font-weight: 600; line-height: 25px; text-align: center; }
.cal .day { width: 74px; height: 51px; border-radius: 0 0 17px 17px; background: #f8f7f5; color: #222; font-size: 46px; font-weight: 300; line-height: 47px; text-align: center; font-variant-numeric: tabular-nums; letter-spacing: -5px; padding-right: 4px; }
.badge { position: absolute; left: 64px; top: -9px; width: 34px; height: 34px; border-radius: 50%; background: #ea5545; color: #fff; font-size: 18px; line-height: 34px; text-align: center; }
.rule { flex: none; width: 46px; height: 90px; margin-top: -3px; background: linear-gradient(#7c4c9c, #7c4c9c) 24px 0 / 2px 100% no-repeat; }
.dict > svg { height: 80px; }
.dict > span { position: absolute; top: 13px; color: #f3e7e2; font: 41px/44px "Liberation Serif", serif; }
.thumb { position: relative; width: 86px; margin-top: 15px; }
.thumb.t2 { margin-top: 14px; }
.thumb.t3 { width: 66px; margin-top: -7px; }
.thumb .mini { position: absolute; left: 56px; top: 34px; width: 28px; height: 28px; }
.thumb.t2 .mini { top: 35px; }
.thumb.t3 .mini { left: 46px; top: 56px; }
.app > .trash { width: 66px; height: 86px; margin-top: -6px; }
```
